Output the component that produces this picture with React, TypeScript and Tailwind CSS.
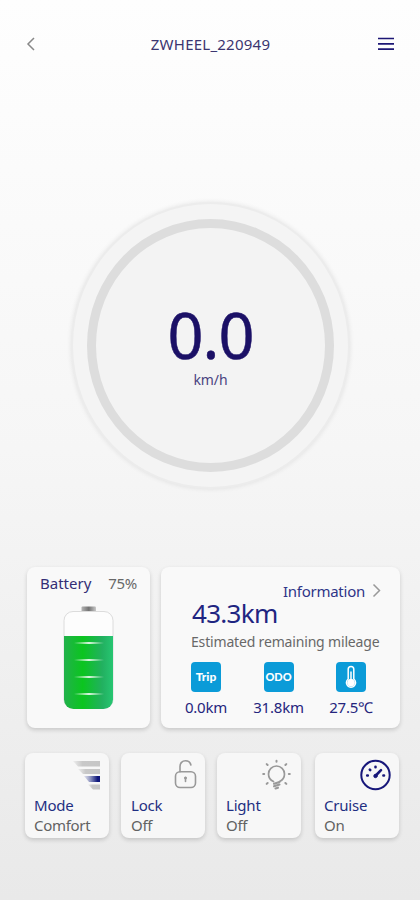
import type { ReactNode } from "react";

const FONT = "font-['Noto_Sans','Noto_Sans_CJK_SC',sans-serif]";

function ModeIcon() {
  return (
    <svg width="29" height="32" viewBox="0 0 29 32">
      <defs>
        <linearGradient id="bar">
          <stop offset="0" stopColor="#c8c8c8" stopOpacity="0.2" />
          <stop offset="0.35" stopColor="#c8c8c8" />
          <stop offset="1" stopColor="#c6c6c6" />
        </linearGradient>
        <linearGradient id="barActive">
          <stop offset="0" stopColor="#b4b8d4" stopOpacity="0.4" />
          <stop offset="0.5" stopColor="#7078b0" />
          <stop offset="0.85" stopColor="#10187c" />
        </linearGradient>
      </defs>
      <path d="M1 2h27v5.500H6z" fill="url(#bar)" />
      <path d="M6 10h22v5H11z" fill="url(#bar)" />
      <path d="M12 17h16v6H17z" fill="url(#barActive)" />
      <path d="M16 25.500h12v5H21z" fill="url(#bar)" />
    </svg>
  );
}

function LockIcon() {
  return (
    <svg width="23" height="31" viewBox="0 0 23 31" fill="none" stroke="#999" strokeWidth="1.600" strokeLinecap="round">
      <rect x="1.500" y="12.800" width="20" height="15.700" rx="4.500" />
      <path d="M6 12.800V7.500C6 4 8.200 1.800 11.500 1.800c2.800 0 4.800 1.500 5.400 4.200" />
      <path d="M11.500 18.500v4" />
      <circle cx="11.500" cy="19" r="0.700" />
    </svg>
  );
}

function LightIcon() {
  return (
    <svg width="31" height="32" viewBox="0 0 31 32" fill="none" stroke="#999" strokeWidth="1.700" strokeLinecap="round">
      <path d="M11.500 22.600c-3-1.400-5-4.200-5-7.600a8 8 0 0 1 16 0c0 3.400-2 6.200-5 7.600" />
      <path d="M12 24.800l5.500-1.700M12 27.300l5.500-1.700M13.500 29.500l2.500-.8" strokeWidth="2.100" />
      <path d="M14.500 1.800v1M4.700 5.100l.9.900M24.300 5.100l-.9.900M1.200 15h1M26.800 15h1M4.700 24.900l.9-.9M24.300 24.900l-.9-.9" strokeWidth="2" />
    </svg>
  );
}

function CruiseIcon() {
  return (
    <svg width="32" height="32" viewBox="0 0 32 32" fill="none" stroke="#17177a" strokeLinecap="round">
      <circle cx="16.500" cy="16" r="14.200" strokeWidth="2" />
      <path d="M16.800 16.500l5.200-5.300" strokeWidth="2.600" />
      <circle cx="16.500" cy="17" r="1.700" fill="#17177a" />
      <path d="M8.200 16.500h.6M24.400 16.500h.6M10.800 10.600l.4.400M16.500 7.700v.6" strokeWidth="2.600" />
    </svg>
  );
}

function Battery() {
  return (
    <svg width="52" height="106" viewBox="0 0 52 106">
      <defs>
        <linearGradient id="cap">
          <stop offset="0" stopColor="#b5b5b5" />
          <stop offset="0.5" stopColor="#737373" />
          <stop offset="1" stopColor="#c8c8c8" />
        </linearGradient>
        <linearGradient id="charge">
          <stop offset="0" stopColor="#22b14c" />
          <stop offset="0.38" stopColor="#0bc51f" />
          <stop offset="0.78" stopColor="#22b060" />
          <stop offset="1" stopColor="#27c672" />
        </linearGradient>
        <linearGradient id="tick">
          <stop offset="0" stopColor="#fff" stopOpacity="0" />
          <stop offset="0.5" stopColor="#fff" stopOpacity="0.85" />
          <stop offset="1" stopColor="#fff" stopOpacity="0" />
        </linearGradient>
      </defs>
      <rect x="18.500" y="1.500" width="14.500" height="6" rx="1" fill="url(#cap)" />
      <rect x="1" y="6.500" width="49" height="97" rx="9" fill="#fdfdfd" stroke="#dcdcdc" />
      <path d="M1 31h49v63.500a9.500 9.500 0 0 1-9.500 9.500h-30A9.500 9.500 0 0 1 1 94.500z" fill="url(#charge)" />
      {[38, 55, 72, 89].map((y) => (
        <rect key={y} x="11" y={y - 1} width="30" height="2" fill="url(#tick)" />
      ))}
    </svg>
  );
}

function Thermometer() {
  return (
    <svg width="14" height="24" viewBox="0 0 14 24" fill="none" stroke="#fff">
      <path d="M4.200 14V4.300a2.800 2.800 0 0 1 5.600 0V14a4.600 4.600 0 1 1-5.600 0z" strokeWidth="1.500" />
      <path d="M7 6.500V17" strokeWidth="1.500" />
      <circle cx="7" cy="17.700" r="3.400" fill="#fff" />
    </svg>
  );
}

function Stat({ badge, value }: { badge: ReactNode; value: string }) {
  return (
    <div className="flex w-[72px] flex-col items-center">
      <div className="flex h-[30px] w-[30px] items-center justify-center rounded-[4px] bg-[#0b9bd8] font-['Lato',sans-serif] font-black text-white">
        {badge}
      </div>
      <span className="mt-[5px] whitespace-nowrap text-[15px] leading-5 tracking-[-0.200px] text-[#25257d]">{value}</span>
    </div>
  );
}

function Tile({ title, state, icon, className = "" }: { title: string; state: string; icon: ReactNode; className?: string }) {
  return (
    <div className={`flex h-[85px] w-[84px] flex-col rounded-[8px] bg-[#f7f7f7] pl-[9px] pr-2 pt-[6px] shadow-[0_2px_4px_rgba(0,0,0,0.16)] ${className}`}>
      <div className="flex h-9 items-start justify-end">{icon}</div>
      <span className="text-[15px] leading-5 tracking-[-0.200px] text-[#1f2f82]">{title}</span>
      <span className="text-[15px] leading-5 tracking-[-0.300px] text-[#626262]">{state}</span>
    </div>
  );
}

export default function App() {
  return (
    <div className={`flex h-[900px] w-[420px] flex-col overflow-hidden bg-linear-to-b from-[#fefefe] via-[#f6f6f6] to-[#e9e9e9] ${FONT}`}>
      <header className="mt-[32px] flex h-6 items-center justify-between pl-[26px] pr-[25px]">
        <svg width="17" height="24" viewBox="0 0 17 24" fill="none" stroke="#888" strokeWidth="1.500">
          <path d="M8 6l-6 6 6 6" />
        </svg>
        <h1 className="text-[15px] leading-6 tracking-[0.240px] text-[#3b3570]">ZWHEEL_220949</h1>
        <svg width="17" height="24" viewBox="0 0 17 24" stroke="#1d1775" strokeWidth="1.700">
          <path d="M0 6.500h16M0 11.800h16M0 17.200h16" />
        </svg>
      </header>

      <main className="flex flex-col">
        <section className="ml-[71px] mt-[146px] flex h-[287px] w-[279px] items-center justify-center rounded-[50%] border-2 border-[#ececec] bg-[#f4f4f4] shadow-[0_0_5px_rgba(0,0,0,0.09)]">
          <div className="flex h-[253px] w-[247px] flex-col items-center rounded-[50%] border-[9px] border-[#dddddd] bg-[#f3f3f3]">
            <span className="mt-[71px] text-[63px] leading-[72px] tracking-[-1px] text-[#1b1066] [-webkit-text-stroke:0.500px_#1b1066]">0.0</span>
            <span className="-mt-px text-[14px] leading-5 tracking-[-0.100px] text-[#4a4380]">km/h</span>
          </div>
        </section>

        <section className="ml-[27px] mt-[78px] flex gap-[11px]">
          <div className="flex h-[161px] w-[123px] flex-col items-center rounded-[8px] bg-[#f9f9f9] shadow-[0_2px_4px_rgba(0,0,0,0.16)]">
            <div className="flex w-full justify-between px-[13px] pt-[6px] text-[15px] leading-5">
              <span className="text-[#342e76]">Battery</span>
              <span className="tracking-[-0.300px] text-[#686868]">75%</span>
            </div>
            <div className="mt-[12px]">
              <Battery />
            </div>
          </div>

          <div className="flex h-[161px] w-[239px] flex-col rounded-[8px] bg-[#f9f9f9] shadow-[0_2px_4px_rgba(0,0,0,0.16)]">
            <div className="mt-[14px] flex h-5 items-center justify-end gap-[7px] pr-[18px]">
              <span className="text-[15px] leading-5 tracking-[-0.250px] text-[#2f3588]">Information</span>
              <svg width="10" height="16" viewBox="0 0 10 16" fill="none" stroke="#999" strokeWidth="1.500">
                <path d="M1.500 1.500l6 6-6 6" />
              </svg>
            </div>
            <span className="-mt-[4px] ml-[31px] text-[26px] leading-[32px] tracking-[-0.700px] text-[#1f2581]">43.3km</span>
            <span className="ml-[30px] mt-[3px] whitespace-nowrap text-[14px] leading-5 tracking-[-0.170px] text-[#686868]">Estimated remaining mileage</span>
            <div className="ml-[9px] mt-[10px] flex gap-[0.500px]">
              <Stat badge={<span className="text-[12px]">Trip</span>} value="0.0km" />
              <Stat badge={<span className="text-[11px]">ODO</span>} value="31.8km" />
              <Stat badge={<Thermometer />} value="27.5℃" />
            </div>
          </div>
        </section>

        <section className="ml-[25px] mt-[25px] flex gap-3">
          <Tile title="Mode" state="Comfort" icon={<ModeIcon />} />
          <Tile title="Lock" state="Off" icon={<LockIcon />} className="pl-[10px]" />
          <Tile title="Light" state="Off" icon={<LightIcon />} />
          <Tile title="Cruise" state="On" icon={<CruiseIcon />} className="ml-[2px]" />
        </section>
      </main>
    </div>
  );
}
